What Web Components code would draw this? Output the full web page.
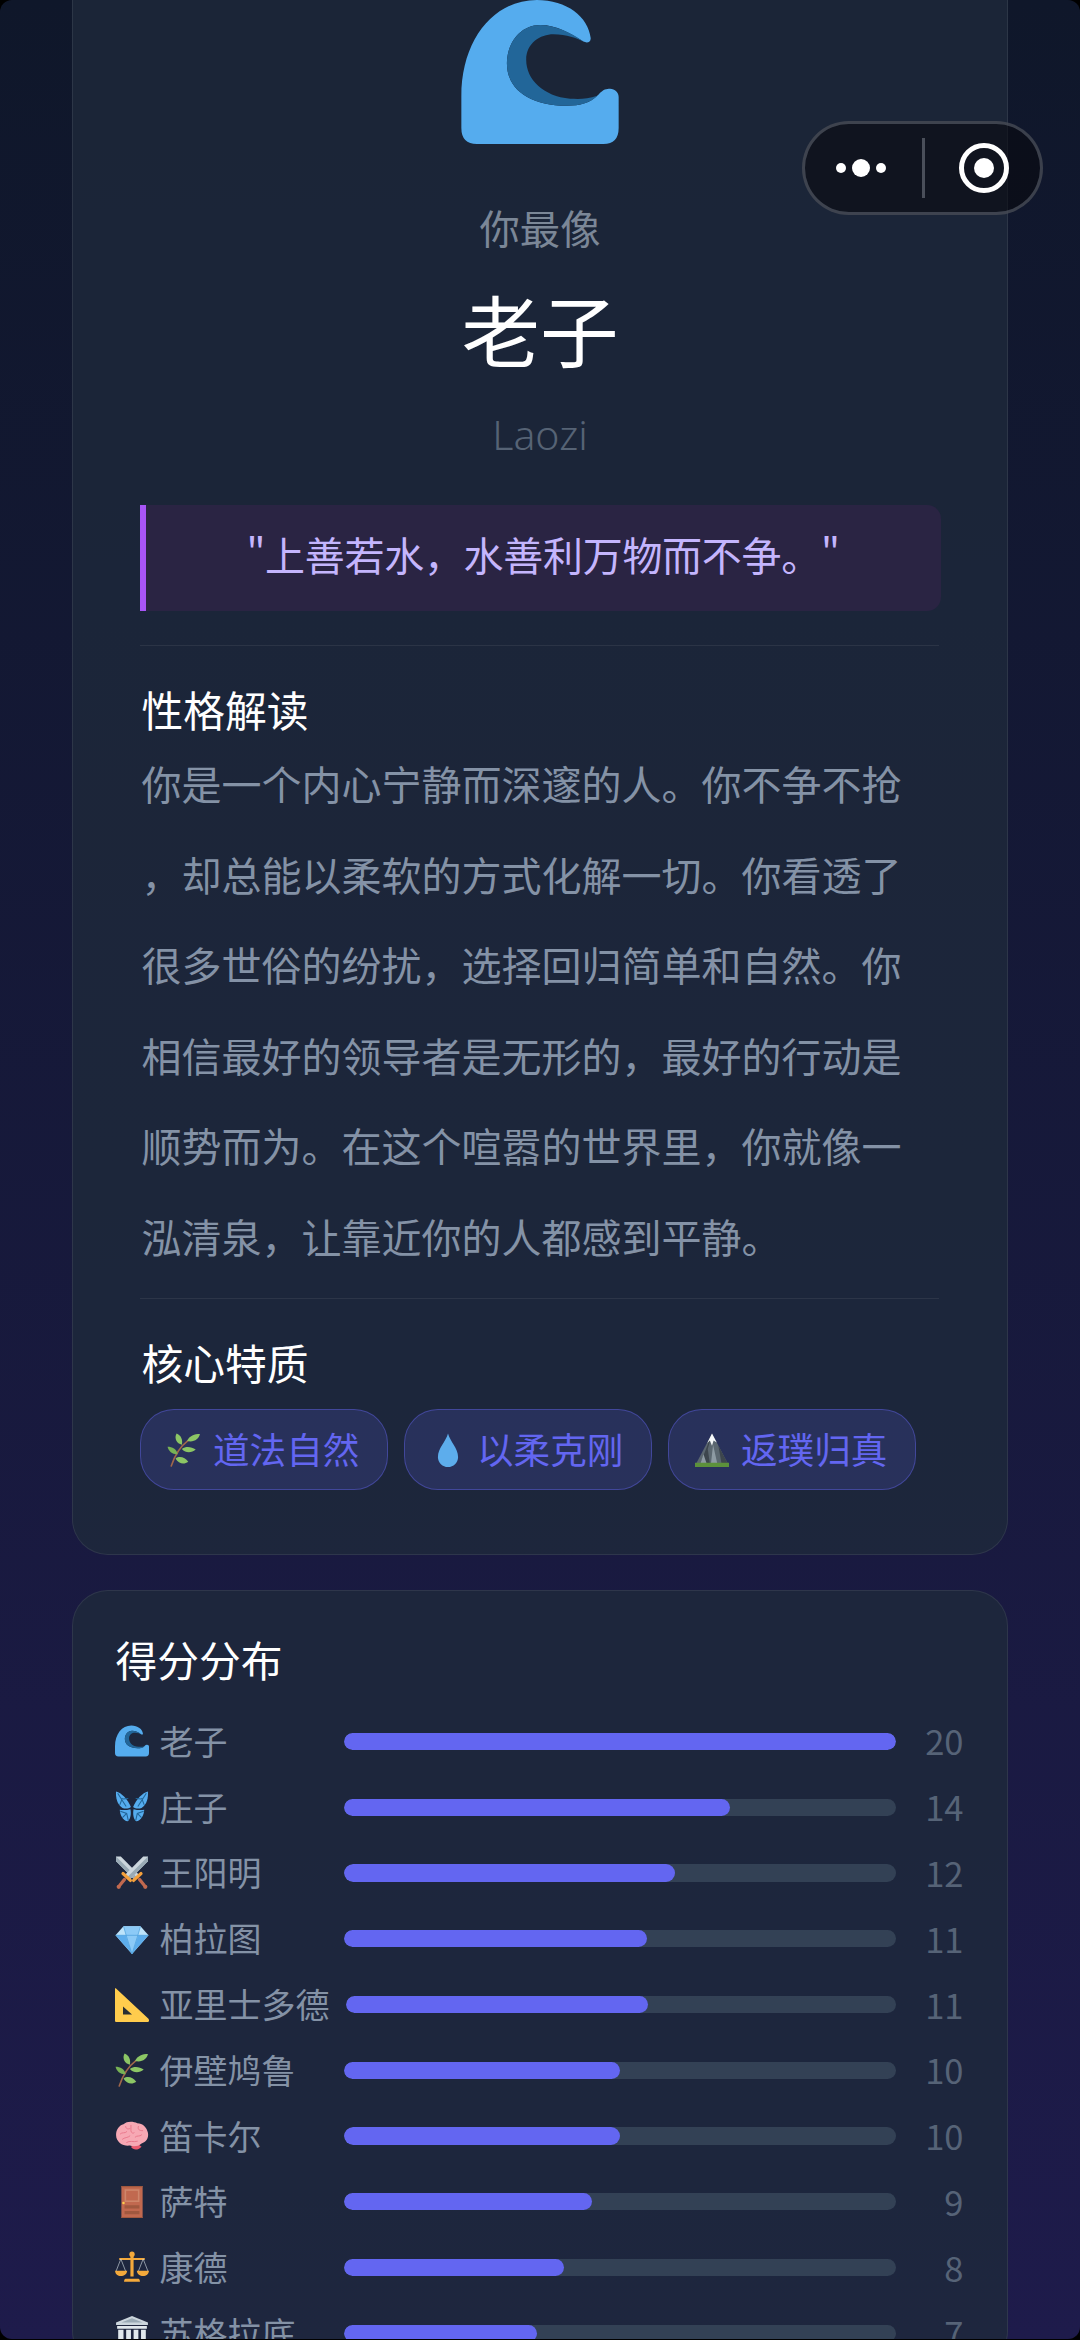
<!DOCTYPE html>
<html lang="zh"><head><meta charset="utf-8">
<style>
html,body{margin:0;padding:0;background:#000}
body{width:1080px;height:2340px;overflow:hidden;font-family:"Noto Sans CJK SC","Noto Sans",sans-serif}
</style></head><body>
<result-page>
  <capsule-menu slot="overlay"></capsule-menu>
  <result-card></result-card>
  <score-card>
    <score-row icon="wave" name="老子" score="20"></score-row>
    <score-row icon="butterfly" name="庄子" score="14"></score-row>
    <score-row icon="swords" name="王阳明" score="12"></score-row>
    <score-row icon="gem" name="柏拉图" score="11"></score-row>
    <score-row icon="ruler" name="亚里士多德" score="11"></score-row>
    <score-row icon="herb" name="伊壁鸠鲁" score="10"></score-row>
    <score-row icon="brain" name="笛卡尔" score="10"></score-row>
    <score-row icon="door" name="萨特" score="9"></score-row>
    <score-row icon="scales" name="康德" score="8"></score-row>
    <score-row icon="temple" name="苏格拉底" score="7"></score-row>
  </score-card>
</result-page>
<script>
const ICONS={
wave:`<svg viewBox="243 0 473 433"><path fill="#55acee" d="M290 433Q243 433 243 385V290C243 120 340 0 470 0C560 0 625 50 632 115C632 128 620 130 610 125C570 100 530 75 480 75C420 75 380 130 380 190C380 270 450 318 560 318C600 318 630 310 655 285C670 268 680 267 690 267C705 267 716 278 716 292V385Q716 433 670 433Z"/><path fill="#269" d="M610 125C570 95 520 75 480 75C420 75 380 130 380 190C380 270 450 318 560 318C600 318 630 310 652 288C620 300 590 297 570 297C490 290 438 240 438 180C438 130 480 103 520 103C560 103 590 115 610 125Z"/></svg>`,
butterfly:`<svg viewBox="0 0 64 64"><path fill="#55acee" d="M30 32C24 18 12 5 2 3C1 14 4 28 14 34C20 36 26 35 30 32Z"/><path fill="#55acee" d="M34 32C40 18 52 5 62 3C63 14 60 28 50 34C44 36 38 35 34 32Z"/><path fill="#55acee" d="M29 36C22 38 14 38 9 37C9 46 15 58 24 59C29 55 31 45 29 36Z"/><path fill="#55acee" d="M35 36C42 38 50 38 55 37C55 46 49 58 40 59C35 55 33 45 35 36Z"/><path fill="none" stroke="#226699" stroke-width="2" d="M5 6L21 31M14 15L9 28M15 17L25 16M10 40L22 44L25 57M22 44L14 52M59 6L43 31M50 15L55 28M49 17L39 16M54 40L42 44L39 57M42 44L50 52"/></svg>`,
swords:`<svg viewBox="0 0 64 64"><path fill="#ccd6dd" d="M2 1H11L46 36L37 45L2 10Z"/><path fill="#99aab5" d="M2 1L42 41L37 45L2 10Z"/><path fill="#ccd6dd" d="M62 1H53L18 36L27 45L62 10Z"/><path fill="#99aab5" d="M62 1L22 41L27 45L62 10Z"/><path fill="none" stroke="#f4a03c" stroke-width="6" stroke-linecap="round" d="M35 46L49 33M29 46L15 33"/><path fill="none" stroke="#c1694f" stroke-width="6" stroke-linecap="round" d="M46 44L55 55M18 44L9 55"/><circle cx="57" cy="58" r="4" fill="#c1694f"/><circle cx="7" cy="58" r="4" fill="#c1694f"/></svg>`,
gem:`<svg viewBox="0 0 64 64"><path fill="#bde3fa" d="M16 8H48L63 25L32 60L1 25Z"/><path fill="#5dadec" d="M1 25H63L32 60Z"/><path fill="#8ccaf7" d="M20 25H44L32 60Z"/><path fill="#8ccaf7" d="M16 8L21 25H43L48 8Z"/><path fill="none" stroke="#4a9fdc" stroke-width="1.3" d="M1 25H63M16 8L21 25L32 60L43 25L48 8"/></svg>`,
ruler:`<svg viewBox="0 0 64 64"><path fill="#ffcc4d" d="M0 1C0 0 1 0 2 1L63 58C65 61 64 64 61 64H3C1 64 0 63 0 61Z"/><path fill="#292f33" d="M15 35V50H32Z"/></svg>`,
herb:`<svg viewBox="0 0 64 64"><path fill="none" stroke="#a0674b" stroke-width="3" stroke-linecap="round" d="M8 62C14 44 24 26 40 14"/><path fill="#8cc665" d="M38 15C42 5 52 2 62 2C60 12 50 18 38 15Z"/><path fill="#8cc665" d="M28 22C30 12 26 4 18 1C13 10 18 20 28 22Z"/><path fill="#77b255" d="M20 40C18 30 10 26 1 26C3 35 11 41 20 40Z"/><path fill="#8cc665" d="M28 30C36 24 46 26 54 31C46 38 35 38 28 30Z"/><path fill="#8cc665" d="M16 48C24 42 34 46 40 54C32 60 22 58 16 48Z"/></svg>`,
brain:`<svg viewBox="0 0 64 64"><path fill="#ea596e" d="M30 52C34 58 42 60 50 52L42 46Z"/><path fill="#f7a8b4" d="M2 30C2 20 8 12 16 10C22 4 34 4 42 8C52 8 60 16 62 26C64 36 58 44 50 46C44 52 34 52 28 50C16 52 2 44 2 30Z"/><path fill="none" stroke="#e8758a" stroke-width="1.7" stroke-linecap="round" d="M10 28C14 24 18 28 22 24M14 38C18 34 24 36 28 32M30 12V22C30 26 34 28 36 26M38 34C42 30 46 34 50 30M44 14C42 20 46 22 52 22M20 14C20 18 24 20 28 18M22 44C28 40 34 44 42 42"/></svg>`,
door:`<svg viewBox="0 0 64 64"><path fill="#c1694f" d="M12 2H52V62H12Z"/><path fill="#a0583f" d="M12 2H52V4H12ZM12 60H52V62H12Z"/><path fill="#d99e82" fill-opacity=".55" d="M18 8H46V32H18Z"/><path fill="#c1694f" d="M21 11H43V29H21Z"/><path fill="#a0583f" d="M18 38H46V44H18ZM18 49H46V55H18Z"/><circle cx="16" cy="34" r="2.4" fill="#ffcc4d"/></svg>`,
scales:`<svg viewBox="0 0 64 64"><path fill="#f4a93b" d="M29 4H35V48H29ZM8 13H56V17H8ZM20 52H44C46 52 47 55 47 58H17C17 55 18 52 20 52Z"/><circle cx="32" cy="6" r="5" fill="#f4a93b"/><path fill="none" stroke="#ccd6dd" stroke-width="1.2" d="M11 15L2 38M11 15L20 38M53 15L44 38M53 15L62 38"/><path fill="#f4a93b" d="M0 37H23C22 44 17 47 11 47C5 47 1 44 0 37ZM41 37H64C63 44 59 47 53 47C47 47 42 44 41 37Z"/></svg>`,
temple:`<svg viewBox="0 0 64 64"><path fill="#ccd6dd" d="M32 0L62 12V17H2V12Z"/><path fill="#9aaab5" d="M32 4L52 12H12Z"/><path fill="#e1e8ed" d="M4 19H60V24H4ZM6 26H16V60H6ZM21 26H30V60H21ZM35 26H44V60H35ZM49 26H58V60H49Z"/><path fill="#8899a6" d="M2 60H62V64H2Z"/></svg>`,
drop:`<svg viewBox="0 0 64 64"><path fill="#5dadec" d="M32 1C36 16 51 29 51 45C51 56 42 64 32 64C22 64 13 56 13 45C13 29 28 16 32 1Z"/></svg>`,
mountain:`<svg viewBox="0 0 64 64"><path fill="#5b6770" d="M32 1L62 58H2Z"/><path fill="#3d464d" d="M32 1L10 58H28L24 30ZM44 24L50 58H62Z"/><path fill="#8d9aa3" d="M34 22L42 58H30ZM16 40L22 58H10Z"/><path fill="#f5f8fa" d="M32 1L41 18L35 14L32 24L28 14L23 19Z"/><path fill="#5c913b" d="M0 56H64V64H0Z"/></svg>`
};
class BaseEl extends HTMLElement{
  render(html){(this.shadowRoot||this.attachShadow({mode:'open'})).innerHTML=html}
}
customElements.define('emoji-icon',class extends BaseEl{connectedCallback(){
  this.render(`<style>:host{display:inline-flex;width:34px;height:34px;flex:none}svg{width:100%;height:100%;display:block}</style>${ICONS[this.getAttribute('name')]}`)
}});
customElements.define('result-page',class extends BaseEl{connectedCallback(){
  this.render(`<style>
  :host{display:block;position:relative;width:1080px;height:2339px;overflow:hidden;border-radius:12px;
  background:linear-gradient(180deg,#0f172a 0,#1e1b4b 2340px);color:#94a3b8}
  .col{display:flex;flex-direction:column;padding:0 72px;margin-top:-60px}
  </style><div class="col"><slot></slot></div><slot name="overlay"></slot>`)
}});
customElements.define('capsule-menu',class extends BaseEl{connectedCallback(){
  this.render(`<style>:host{position:absolute;left:802px;top:121px;width:241px;height:94px;box-sizing:border-box;border:3px solid rgba(120,126,138,.45);border-radius:47px;background:rgba(8,8,14,.58);display:block}
  svg{position:absolute;left:-3px;top:-3px}</style>
  <svg width="241" height="94" viewBox="802 121 241 94"><circle cx="841" cy="168" r="5" fill="#fff"/><circle cx="861" cy="168" r="9" fill="#fff"/><circle cx="881" cy="168" r="5" fill="#fff"/><rect x="922" y="138" width="3" height="60" fill="#4a4f5a"/><circle cx="984" cy="168" r="22.5" fill="none" stroke="#fff" stroke-width="5"/><circle cx="984" cy="168" r="10" fill="#fff"/></svg>`)
}});
customElements.define('trait-chip',class extends BaseEl{connectedCallback(){
  this.render(`<style>:host{display:inline-flex;align-items:center;width:248px;justify-content:flex-start;height:81px;box-sizing:border-box;padding:0 0 0 26.5px;gap:12px;border:1.5px solid rgba(99,102,241,.42);border-radius:34px;background:rgba(99,102,241,.18);color:#6366f1;font-size:36.6px;white-space:nowrap}span{display:block;padding-bottom:2px}</style><emoji-icon name="${this.getAttribute('icon')}"></emoji-icon><span><slot></slot></span>`)
}});
customElements.define('result-card',class extends BaseEl{connectedCallback(){
  this.render(`<style>
  :host{display:block;box-sizing:border-box;border:1.5px solid rgba(255,255,255,.08);border-radius:36px;background:rgba(30,41,59,.8);padding:58.5px 66.5px 64px;text-align:left}
  .wave{display:block;width:158px;height:144px;margin:0 auto}
  .c{text-align:center}
  .lead{font-size:40.32px;line-height:56px;margin-top:55px;color:#7b8797}
  h1{font-size:78.5px;line-height:100px;margin:23px 0 0;font-weight:400;color:#fff}
  .en{font-size:41px;line-height:56px;margin-top:28px;color:#566375;font-family:"Noto Sans",sans-serif;font-weight:300}
  .quote{margin-top:43px;height:106px;box-sizing:border-box;border-left:6px solid #a855f7;border-radius:0 14px 14px 0;background:#2a2443;color:#c4b5fd;font-size:40px;letter-spacing:-.3px;display:flex;align-items:center;justify-content:center;padding-bottom:7px}
  hr{border:0;height:1.5px;background:rgba(255,255,255,.07);margin:34px 2px 0 0}
  h2{font-size:41.76px;line-height:56px;font-weight:400;color:#fff;margin:34.5px 0 1.5px 2px}
  p{margin:0 0 0 2px;font-size:40px;line-height:90.6px;color:#8492a6;white-space:nowrap}
  .h2{margin-top:35px;margin-bottom:0}
  .hr2{margin-top:16px}
  .chips{display:flex;gap:16px;margin-top:19px}
  </style>
  <div class="wave">${ICONS.wave.replace('<svg ','<svg style="width:158px;height:144px;display:block" ')}</div>
  <div class="c lead">你最像</div>
  <h1 class="c">老子</h1>
  <div class="c en">Laozi</div>
  <div class="quote">"上善若水，水善利万物而不争。"</div>
  <hr>
  <h2>性格解读</h2>
  <p>你是一个内心宁静而深邃的人。你不争不抢<br>，却总能以柔软的方式化解一切。你看透了<br>很多世俗的纷扰，选择回归简单和自然。你<br>相信最好的领导者是无形的，最好的行动是<br>顺势而为。在这个喧嚣的世界里，你就像一<br>泓清泉，让靠近你的人都感到平静。</p>
  <hr class="hr2">
  <h2 class="h2">核心特质</h2>
  <div class="chips"><trait-chip icon="herb">道法自然</trait-chip><trait-chip icon="drop">以柔克刚</trait-chip><trait-chip icon="mountain">返璞归真</trait-chip></div>`)
}});
customElements.define('score-card',class extends BaseEl{connectedCallback(){
  this.render(`<style>
  :host{display:block;box-sizing:border-box;margin-top:35px;border:1.5px solid rgba(255,255,255,.08);border-radius:36px;background:rgba(30,41,59,.8);padding:39.5px 43.5px 0 41.5px}
  h2{font-size:41.76px;line-height:56px;font-weight:400;color:#fff;margin:0 0 22px 1px}
  </style><h2>得分分布</h2><slot></slot>`)
}});
customElements.define('score-row',class extends BaseEl{connectedCallback(){
  const s=+this.getAttribute('score');
  this.render(`<style>
  :host{display:flex;align-items:center;height:65.78px;font-size:34px;color:#8492a6}
  .l{display:flex;align-items:center;gap:11px;min-width:229px;padding-right:16px;box-sizing:border-box;white-space:nowrap}
  .l span,.n{padding-bottom:2px}
  .t{flex:1;height:17.3px;border-radius:9px;background:#334155;overflow:hidden}
  .f{height:100%;border-radius:9px;background:#6366f1;width:${s*5}%}
  .n{width:68px;text-align:right;color:#566377;font-size:34.56px}
  </style><div class="l"><emoji-icon name="${this.getAttribute('icon')}"></emoji-icon><span>${this.getAttribute('name')}</span></div><div class="t"><div class="f"></div></div><div class="n">${s}</div>`)
}});
</script>
</body></html>
